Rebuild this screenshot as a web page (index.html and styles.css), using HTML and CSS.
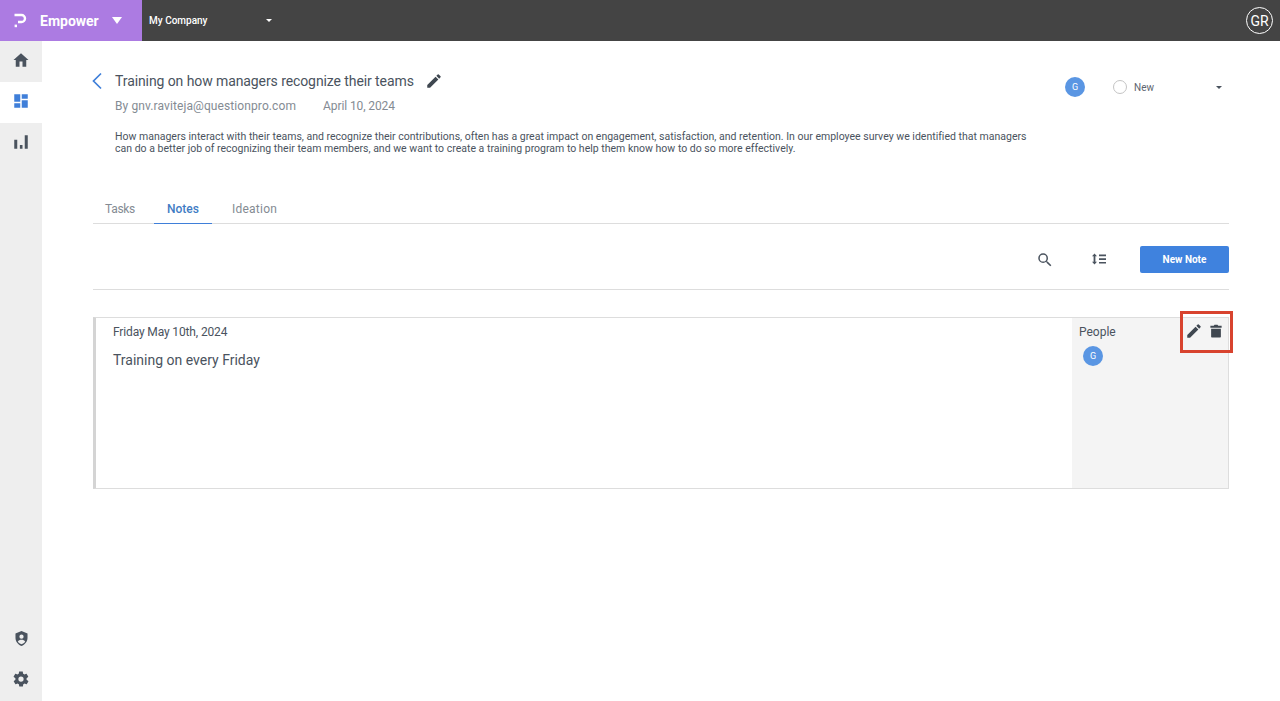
FILE: index.html
```html
<!DOCTYPE html>
<html lang="en">
<head>
<meta charset="utf-8">
<title>Empower</title>
<link rel="stylesheet" href="styles.css">
</head>
<body>
<header class="topbar">
  <div class="brand">
    <svg class="brand-logo" viewBox="0 0 14 16" width="14" height="16"><path d="M1.500 2H8.500A3.500 3.500 0 0 1 8.500 9H5" fill="none" stroke="#fff" stroke-width="2.400"/><rect x="1.600" y="11.600" width="2.400" height="2.600" fill="#fff"/></svg>
    <span class="brand-name">Empower</span>
    <span class="caret-lg"></span>
  </div>
  <div class="company">
    <span class="company-name">My Company</span>
    <span class="caret-sm caret-white"></span>
  </div>
  <div class="user">GR</div>
</header>
<div class="shell">
  <nav class="sidebar">
    <a class="nav-item"><svg viewBox="0 0 24 24" width="18" height="18"><path d="M10 21v-7h4v7h5v-9h3L12 3 2 12h3v9z" fill="#4a535e"/></svg></a>
    <a class="nav-item active"><svg viewBox="0 0 24 24" width="18" height="18"><path d="M3 13h8V3H3zm0 8h8v-6H3zm10 0h8V11h-8zm0-18v6h8V3z" fill="#3f7fd9"/></svg></a>
    <a class="nav-item"><svg viewBox="0 0 24 24" width="18" height="18"><path d="M3 9h4v12H3zM10.500 16h3.500v5h-3.500zM17 3h4v18h-4z" fill="#4a535e"/></svg></a>
    <div class="nav-spacer"></div>
    <a class="nav-item"><svg viewBox="0 0 24 24" width="17" height="17"><path fill-rule="evenodd" d="M12 1.500 3.500 5v6c0 5.300 3.600 10 8.500 11.500 4.900-1.500 8.500-6.200 8.500-11.500V5zM12 6.500a3 3 0 1 1 0 6 3 3 0 0 1 0-6zM6.800 16.500c1-1.800 3-2.700 5.200-2.700s4.200.9 5.200 2.700c-1.200 1.700-3 3-5.200 3.500-2.200-.5-4-1.800-5.200-3.500z" fill="#4a535e"/></svg></a>
    <a class="nav-item"><svg viewBox="0 0 24 24" width="18" height="18"><path fill-rule="evenodd" d="M19.400 13c.1-.3.100-.7.100-1s0-.7-.1-1l2.100-1.600c.2-.2.200-.4.100-.6l-2-3.500c-.1-.2-.4-.3-.6-.2l-2.500 1c-.5-.4-1.100-.7-1.700-1l-.4-2.700c0-.2-.2-.4-.5-.4h-4c-.3 0-.5.200-.5.400l-.4 2.700c-.6.300-1.200.6-1.700 1l-2.500-1c-.2-.1-.5 0-.6.200l-2 3.500c-.1.200-.1.400.1.600L4.600 11c-.1.300-.1.700-.1 1s0 .7.100 1l-2.100 1.600c-.2.200-.2.400-.1.600l2 3.500c.1.200.4.300.6.200l2.500-1c.5.400 1.100.7 1.700 1l.4 2.700c0 .2.200.4.500.4h4c.3 0 .5-.2.500-.4l.4-2.700c.6-.3 1.200-.6 1.700-1l2.500 1c.2.100.5 0 .6-.2l2-3.500c.1-.2.100-.4-.1-.6zM12 15.500a3.500 3.500 0 1 1 0-7 3.500 3.500 0 0 1 0 7z" fill="#4a535e"/></svg></a>
  </nav>
  <main class="content">
    <section class="head">
      <div class="head-main">
        <div class="title-row">
          <svg class="back" viewBox="0 0 12 18" width="12" height="18"><path d="M10 1.500 2.500 9l7.500 7.500" fill="none" stroke="#3f7fd9" stroke-width="1.700"/></svg>
          <h1 class="title">Training on how managers recognize their teams</h1>
          <svg class="title-edit" viewBox="0 0 24 24" width="18" height="18"><path d="M3 17.250V21h3.750L17.810 9.940l-3.750-3.750zM20.710 7.040a1 1 0 0 0 0-1.410l-2.340-2.340a1 1 0 0 0-1.410 0l-1.830 1.830 3.750 3.750z" fill="#3f4750"/></svg>
        </div>
        <div class="meta"><span class="author">By gnv.raviteja@questionpro.com</span><span class="date">April 10, 2024</span></div>
        <p class="desc">How managers interact with their teams, and recognize their contributions, often has a great impact on engagement, satisfaction, and retention. In our employee survey we identified that managers can do a better job of recognizing their team members, and we want to create a training program to help them know how to do so more effectively.</p>
      </div>
      <div class="head-side">
        <span class="avatar">G</span>
        <div class="status">
          <span class="radio"></span>
          <span class="status-label">New</span>
          <span class="caret-sm caret-dark"></span>
        </div>
      </div>
    </section>
    <div class="tabs">
      <a class="tab tab-first">Tasks</a>
      <a class="tab tab-active">Notes</a>
      <a class="tab tab-last">Ideation</a>
    </div>
    <div class="toolbar">
      <svg class="tool-search" viewBox="0 0 24 24" width="18" height="18"><path d="M15.500 14h-.790l-.280-.270A6.470 6.470 0 0 0 16 9.500 6.500 6.500 0 1 0 9.500 16c1.610 0 3.090-.590 4.230-1.570l.270.280v.790l5 4.990L20.490 19zm-6 0a4.500 4.500 0 1 1 0-9 4.500 4.500 0 0 1 0 9z" fill="#4a535e"/></svg>
      <svg class="tool-sort" viewBox="0 0 16 12" width="16" height="12"><path d="M3.500 0.500 6 3.300H4.400v5.400H6L3.500 11.500 1 8.700h1.600V3.300H1zM8 1.500h7v1.700H8zM8 5.200h7v1.700H8zM8 8.900h7v1.700H8z" fill="#4a535e"/></svg>
      <button class="new-note">New Note</button>
    </div>
    <article class="note">
      <div class="note-body">
        <div class="note-date">Friday May 10th, 2024</div>
        <div class="note-text">Training on every Friday</div>
      </div>
      <aside class="note-side">
        <div class="people">People</div>
        <span class="avatar avatar-note">G</span>
        <div class="note-actions">
          <svg viewBox="0 0 24 24" width="18" height="18"><path d="M3 17.250V21h3.750L17.810 9.940l-3.750-3.750zM20.710 7.040a1 1 0 0 0 0-1.410l-2.340-2.340a1 1 0 0 0-1.410 0l-1.830 1.830 3.750 3.750z" fill="#3f4750"/></svg>
          <svg viewBox="0 0 24 24" width="18" height="18"><path d="M5.500 9h13v10.500a1 1 0 0 1-1 1h-11a1 1 0 0 1-1-1zM4.500 5h4.500l1-1.500h4l1 1.500h4.500v2.500h-15z" fill="#3f4750"/></svg>
        </div>
      </aside>
      <div class="highlight"></div>
    </article>
  </main>
</div>
</body>
</html>
```
FILE: styles.css
```css
* { box-sizing: border-box; }
html, body { margin: 0; height: 100%; }
body {
  font-family: Roboto, "Noto Sans", sans-serif;
  color: #4a535e;
  background: #fff;
  overflow: hidden;
}
.topbar {
  height: 41px;
  background: #444;
  display: flex;
  align-items: center;
  color: #fff;
}
.brand {
  width: 142px;
  height: 100%;
  background: #ac7be2;
  display: flex;
  align-items: center;
  padding-left: 13px;
}
.brand-logo { flex: none; }
.brand-name {
  font-size: 14px;
  font-weight: 700;
  margin-left: 13px;
  width: 72px;
  white-space: nowrap;
}
.caret-lg {
  border-left: 5.500px solid transparent;
  border-right: 5.500px solid transparent;
  border-top: 7px solid #fff;
}
.company {
  width: 130px;
  display: flex;
  align-items: center;
  justify-content: space-between;
  padding-left: 7px;
}
.company-name { font-size: 10px; font-weight: 500; }
.caret-sm {
  border-left: 3px solid transparent;
  border-right: 3px solid transparent;
  border-top: 3.500px solid #fff;
}
.caret-white { border-top-color: #fff; }
.caret-dark { border-top-color: #4a535e; }
.user {
  margin-left: auto;
  margin-right: 7px;
  width: 27px;
  height: 27px;
  border: 1px solid #fff;
  border-radius: 50%;
  font-size: 14px;
  display: flex;
  align-items: center;
  justify-content: center;
}
.shell { display: flex; height: 660px; }
.sidebar {
  width: 42px;
  background: #eee;
  display: flex;
  flex-direction: column;
}
.nav-item {
  height: 41px;
  padding-bottom: 3px;
  display: flex;
  align-items: center;
  justify-content: center;
}
.nav-item.active { background: #fff; }
.nav-spacer { flex: 1; }
.content {
  flex: 1;
  padding: 0 51px;
  min-width: 0;
}
.head {
  display: flex;
  justify-content: space-between;
  height: 156px;
  padding-top: 30px;
}
.head-main { width: 940px; }
.title-row { display: flex; align-items: center; height: 20px; }
.back { margin-left: -2px; margin-right: 12px; flex: none; }
.title {
  font-size: 14px;
  font-weight: 400;
  letter-spacing: -0.09px;
  margin: 0;
  color: #4a535e;
  white-space: nowrap;
}
.title-edit { margin-left: 11px; flex: none; }
.meta {
  margin: 6px 0 0 22px;
  font-size: 12px;
  color: #848b93;
  line-height: 18px;
  display: flex;
  gap: 27px;
}
.author { letter-spacing: 0.1px; }
.date { letter-spacing: -0.1px; }
.desc {
  margin: 16px 0 0 22px;
  font-size: 10.500px;
  letter-spacing: 0.008px;
  line-height: 12px;
  width: 918px;
  color: #4a535e;
}
.head-side {
  display: flex;
  align-items: flex-start;
  width: 164px;
  padding-top: 6px;
}
.avatar {
  width: 20px;
  height: 20px;
  border-radius: 50%;
  background: #5a96e3;
  color: #fff;
  font-size: 9px;
  display: flex;
  align-items: center;
  justify-content: center;
  flex: none;
}
.status {
  display: flex;
  align-items: center;
  height: 20px;
  margin-left: 28px;
  width: 109px;
}
.radio {
  width: 14px;
  height: 14px;
  border: 1px solid #c4c4c4;
  border-radius: 50%;
}
.status-label { font-size: 10px; margin-left: 7px; color: #5d656f; flex: 1; }
.tabs {
  height: 27px;
  border-bottom: 1px solid #ddd;
  display: flex;
}
.tab {
  font-size: 12px;
  color: #848b93;
  height: 27px;
  line-height: 18px;
  padding: 3px 13px 0;
}
.tab-first { padding: 3px 12px 0; margin-right: 7px; letter-spacing: -0.3px; }
.tab-last { margin-left: 7px; letter-spacing: 0.25px; }
.tab-active {
  color: #3f7cc4;
  border-bottom: 1px solid #3f7fd9;
  font-weight: 500;
}
.toolbar {
  height: 66px;
  padding-top: 6px;
  border-bottom: 1px solid #ddd;
  display: flex;
  align-items: center;
  justify-content: flex-end;
}
.tool-search { margin-right: 37px; }
.tool-sort { margin-right: 33px; margin-bottom: 2px; }
.new-note {
  width: 89px;
  height: 27px;
  border: 0;
  border-radius: 2px;
  background: #3f82de;
  color: #fff;
  font: 700 10px Roboto, sans-serif;
}
.note {
  position: relative;
  margin-top: 27px;
  height: 172px;
  border: 1px solid #ddd;
  border-left: 3px solid #d4d4d4;
  display: flex;
}
.note-body { flex: 1; padding: 5px 0 0 17px; }
.note-date { font-size: 12px; letter-spacing: -0.14px; line-height: 18px; color: #4a535e; }
.note-text { font-size: 14px; line-height: 20px; margin-top: 9px; color: #4a535e; }
.note-side {
  position: relative;
  width: 156px;
  background: #f4f4f4;
  padding: 5px 0 0 7px;
}
.people { font-size: 12px; line-height: 18px; }
.avatar-note { margin: 5px 0 0 4px; }
.note-actions {
  position: absolute;
  top: 4px;
  right: 3px;
  display: flex;
  gap: 4px;
}
.highlight {
  position: absolute;
  top: -7px;
  right: -5px;
  width: 53px;
  height: 42px;
  border: 3px solid #d8432e;
  pointer-events: none;
}
```
